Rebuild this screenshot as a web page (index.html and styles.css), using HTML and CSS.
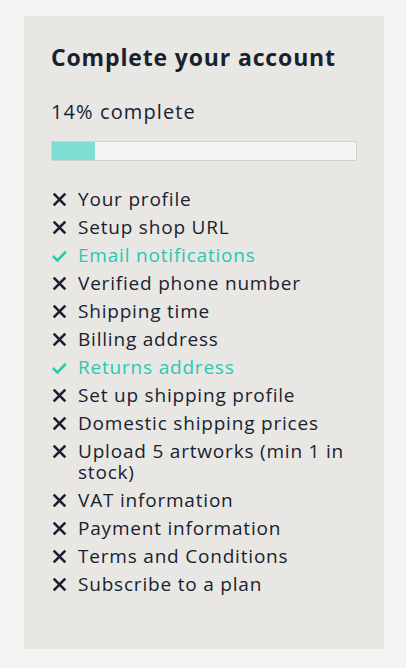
FILE: index.html
```html
<!DOCTYPE html>
<html lang="en">
<head>
  <meta charset="UTF-8">
  <meta name="viewport" content="width=device-width, initial-scale=1">
  <title>Complete your account</title>
  <link rel="stylesheet" href="styles.css">
</head>
<body>
  <section class="account-card">
    <h2>Complete your account</h2>
    <p class="progress-label">14% complete</p>
    <div class="progress-bar">
      <div class="progress-fill" style="width: 14%"></div>
    </div>

    <ul class="checklist">
      <li><svg class="icon" viewBox="0 0 16 16"><path d="M1.8 1.8l12.4 12.4M14.2 1.8l-12.4 12.4"/></svg>Your profile</li>
      <li><svg class="icon" viewBox="0 0 16 16"><path d="M1.8 1.8l12.4 12.4M14.2 1.8l-12.4 12.4"/></svg>Setup shop URL</li>
      <li class="done"><svg class="icon" viewBox="0 0 16 16"><path d="M1 8.5l4.8 4.8 9-9.3"/></svg>Email notifications</li>
      <li><svg class="icon" viewBox="0 0 16 16"><path d="M1.8 1.8l12.4 12.4M14.2 1.8l-12.4 12.4"/></svg>Verified phone number</li>
      <li><svg class="icon" viewBox="0 0 16 16"><path d="M1.8 1.8l12.4 12.4M14.2 1.8l-12.4 12.4"/></svg>Shipping time</li>
      <li><svg class="icon" viewBox="0 0 16 16"><path d="M1.8 1.8l12.4 12.4M14.2 1.8l-12.4 12.4"/></svg>Billing address</li>
      <li class="done"><svg class="icon" viewBox="0 0 16 16"><path d="M1 8.5l4.8 4.8 9-9.3"/></svg>Returns address</li>
      <li><svg class="icon" viewBox="0 0 16 16"><path d="M1.8 1.8l12.4 12.4M14.2 1.8l-12.4 12.4"/></svg>Set up shipping profile</li>
      <li><svg class="icon" viewBox="0 0 16 16"><path d="M1.8 1.8l12.4 12.4M14.2 1.8l-12.4 12.4"/></svg>Domestic shipping prices</li>
      <li><svg class="icon" viewBox="0 0 16 16"><path d="M1.8 1.8l12.4 12.4M14.2 1.8l-12.4 12.4"/></svg>Upload 5 artworks (min 1 in stock)</li>
      <li><svg class="icon" viewBox="0 0 16 16"><path d="M1.8 1.8l12.4 12.4M14.2 1.8l-12.4 12.4"/></svg>VAT information</li>
      <li><svg class="icon" viewBox="0 0 16 16"><path d="M1.8 1.8l12.4 12.4M14.2 1.8l-12.4 12.4"/></svg>Payment information</li>
      <li><svg class="icon" viewBox="0 0 16 16"><path d="M1.8 1.8l12.4 12.4M14.2 1.8l-12.4 12.4"/></svg>Terms and Conditions</li>
      <li><svg class="icon" viewBox="0 0 16 16"><path d="M1.8 1.8l12.4 12.4M14.2 1.8l-12.4 12.4"/></svg>Subscribe to a plan</li>
    </ul>
  </section>
</body>
</html>
```

FILE: styles.css
```css
/* Base */
* { box-sizing: border-box; margin: 0; padding: 0; }
body {
  font-family: 'Open Sans', 'Liberation Sans', sans-serif;
  background: #f4f3f1;
  color: #18222f;
  padding: 16px 22px 19px 24px;
}

/* Card */
.account-card {
  background: #e9e7e4;
  padding: 27px 27px 47px 27px;
  min-height: 633px;
}
.account-card h2 {
  font-size: 23px;
  font-weight: 700;
  line-height: 28px;
  letter-spacing: 0.85px;
}
.progress-label {
  font-size: 20px;
  line-height: 24px;
  margin-top: 29px;
  letter-spacing: 1.1px;
}

/* Progress bar */
.progress-bar {
  margin-top: 17px;
  width: 306px;
  height: 20px;
  background: #f5f5f5;
  border: 1px solid #d5d1cb;
}
.progress-fill {
  height: 100%;
  background: #7ddfd3;
}

/* Checklist */
.checklist {
  list-style: none;
  margin-top: 28px;
}
.checklist li {
  display: flex;
  align-items: flex-start;
  font-size: 19px;
  line-height: 21px;
  margin-bottom: 7px;
  letter-spacing: 0.8px;
}
.checklist li.done {
  color: #27c9b1;
}
.icon {
  flex: 0 0 15px;
  width: 15px;
  height: 15px;
  margin: 3px 11px 0 1px;
  fill: none;
  stroke: currentColor;
  stroke-width: 2.8;
}
```
